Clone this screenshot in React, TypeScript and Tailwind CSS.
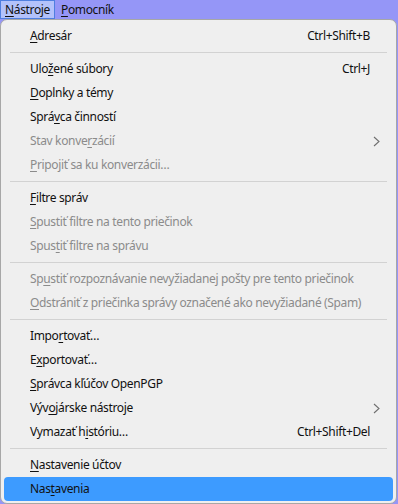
import type { ReactNode } from 'react';

// Thunderbird "Nástroje" menu, opened from the menu bar (Slovak UI).

type Item =
  | { kind: 'sep' }
  | {
      kind: 'item';
      label: string;
      // index of the access-key letter inside label
      key: number;
      shortcut?: string;
      disabled?: boolean;
      submenu?: boolean;
      active?: boolean;
    };

const items: Item[] = [
  { kind: 'item', label: 'Adresár', key: 0, shortcut: 'Ctrl+Shift+B' },
  { kind: 'sep' },
  { kind: 'item', label: 'Uložené súbory', key: 3, shortcut: 'Ctrl+J' },
  { kind: 'item', label: 'Doplnky a témy', key: 0 },
  { kind: 'item', label: 'Správca činností', key: 4 },
  { kind: 'item', label: 'Stav konverzácií', key: 10, disabled: true, submenu: true },
  { kind: 'item', label: 'Pripojiť sa ku konverzácii…', key: 0, disabled: true },
  { kind: 'sep' },
  { kind: 'item', label: 'Filtre správ', key: 0 },
  { kind: 'item', label: 'Spustiť filtre na tento priečinok', key: 0, disabled: true },
  { kind: 'item', label: 'Spustiť filtre na správu', key: 4, disabled: true },
  { kind: 'sep' },
  {
    kind: 'item',
    label: 'Spustiť rozpoznávanie nevyžiadanej pošty pre tento priečinok',
    key: 2,
    disabled: true,
  },
  {
    kind: 'item',
    label: 'Odstrániť z priečinka správy označené ako nevyžiadané (Spam)',
    key: 0,
    disabled: true,
  },
  { kind: 'sep' },
  { kind: 'item', label: 'Importovať…', key: 4 },
  { kind: 'item', label: 'Exportovať…', key: 1 },
  { kind: 'item', label: 'Správca kľúčov OpenPGP', key: 0 },
  { kind: 'item', label: 'Vývojárske nástroje', key: 3, submenu: true },
  { kind: 'item', label: 'Vymazať históriu…', key: 9, shortcut: 'Ctrl+Shift+Del' },
  { kind: 'sep' },
  { kind: 'item', label: 'Nastavenie účtov', key: 0 },
  { kind: 'item', label: 'Nastavenia', key: 3, active: true },
];

function AccessLabel({ text, at }: { text: string; at: number }): ReactNode {
  return (
    <>
      {text.slice(0, at)}
      <span className="underline underline-offset-2">{text[at]}</span>
      {text.slice(at + 1)}
    </>
  );
}

function Chevron() {
  return (
    <svg width="7" height="11" viewBox="0 0 7 11" className="text-[#6f6f6f]">
      <path d="M1 1 L6 5.5 L1 10" fill="none" stroke="currentColor" strokeWidth="1.1" />
    </svg>
  );
}

export default function App() {
  return (
    <div
      className="flex h-[504px] w-[398px] flex-col bg-[#9596f7] text-[12px] tracking-[-0.35px] text-[#111]"
      style={{ fontFamily: '"Segoe UI", "Noto Sans", sans-serif' }}
    >
      <div className="flex h-[19px] items-center">
        <div className="flex h-[19px] items-center border border-[#4f7fe0] bg-[#b3c2fb] px-[4px]">
          <AccessLabel text="Nástroje" at={0} />
        </div>
        <div className="flex h-[19px] items-center px-[6px]">
          <AccessLabel text="Pomocník" at={0} />
        </div>
      </div>

      <div className="mr-[1px] flex flex-1 flex-col rounded-[7px] border border-[#a7a7a7] bg-[#efefef] px-[3px] pt-[4px]">
        {items.map((it, i) =>
          it.kind === 'sep' ? (
            <div key={i} className="flex h-[9px] items-center px-[6px]">
              <div className="h-px w-full bg-[#d2d2d2]" />
            </div>
          ) : (
            <div
              key={i}
              className={
                'flex h-[24px] shrink-0 items-center rounded-[4px] pl-[26px] pr-[23px] ' +
                (it.active ? 'bg-[#3d9bff] ' : '') +
                (it.disabled ? 'text-[#8b8b8b]' : 'text-[#111]')
              }
            >
              <span className="flex-1 whitespace-nowrap">
                <AccessLabel text={it.label} at={it.key} />
              </span>
              {it.shortcut && <span className="whitespace-nowrap">{it.shortcut}</span>}
              {it.submenu && (
                <span className="-mr-[10px] flex items-center">
                  <Chevron />
                </span>
              )}
            </div>
          ),
        )}
      </div>
    </div>
  );
}
